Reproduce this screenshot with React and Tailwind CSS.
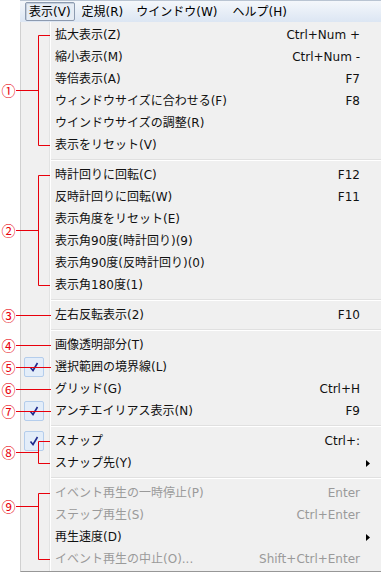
import React from 'react';

// Menu definition - null marks a separator
const items = [
  { label: '拡大表示(Z)', key: 'Ctrl+Num +' },
  { label: '縮小表示(M)', key: 'Ctrl+Num -' },
  { label: '等倍表示(A)', key: 'F7' },
  { label: 'ウィンドウサイズに合わせる(F)', key: 'F8' },
  { label: 'ウインドウサイズの調整(R)' },
  { label: '表示をリセット(V)' },
  null,
  { label: '時計回りに回転(C)', key: 'F12' },
  { label: '反時計回りに回転(W)', key: 'F11' },
  { label: '表示角度をリセット(E)' },
  { label: '表示角90度(時計回り)(9)' },
  { label: '表示角90度(反時計回り)(0)' },
  { label: '表示角180度(1)' },
  null,
  { label: '左右反転表示(2)', key: 'F10' },
  null,
  { label: '画像透明部分(T)' },
  { label: '選択範囲の境界線(L)', checked: true },
  { label: 'グリッド(G)', key: 'Ctrl+H' },
  { label: 'アンチエイリアス表示(N)', key: 'F9', checked: true },
  null,
  { label: 'スナップ', key: 'Ctrl+:', checked: true },
  { label: 'スナップ先(Y)', sub: true },
  null,
  { label: 'イベント再生の一時停止(P)', key: 'Enter', disabled: true },
  { label: 'ステップ再生(S)', key: 'Ctrl+Enter', disabled: true },
  { label: '再生速度(D)', sub: true },
  { label: 'イベント再生の中止(O)...', key: 'Shift+Ctrl+Enter', disabled: true },
];

// Callout marks: circle y, and bracket range (or single line)
const marks = [
  { n: '①', y: 90, from: 35, to: 145 },
  { n: '②', y: 230, from: 175, to: 285 },
  { n: '③', y: 315 },
  { n: '④', y: 345 },
  { n: '⑤', y: 367 },
  { n: '⑥', y: 389 },
  { n: '⑦', y: 411 },
  { n: '⑧', y: 452, from: 441, to: 463 },
  { n: '⑨', y: 506, from: 493, to: 559 },
];

function CheckBox() {
  return (
    <div className="w-[20px] h-[20px] ml-[3px] rounded-[2px] border border-[#b4cdec] bg-[#e3edf9] flex items-center justify-center">
      <svg width="10" height="10" viewBox="0 0 10 10">
        <path d="M1.5 5.5 L4 8.5 L8.5 1" fill="none" stroke="#1f2a8c" strokeWidth="1.6" />
      </svg>
    </div>
  );
}

function MenuItem({ item }) {
  return (
    <div className="flex items-center h-[22px]">
      <div className="w-[29px] shrink-0 flex items-center">
        {item.checked && <CheckBox />}
      </div>
      <span className={`pl-[5px] flex-1 whitespace-nowrap ${item.disabled ? 'text-[#9a9a9a]' : 'text-[#111]'}`}>
        {item.label}
      </span>
      {item.key && (
        <span className={`pr-[21px] whitespace-nowrap ${item.disabled ? 'text-[#9a9a9a]' : 'text-[#111]'}`}>
          {item.key}
        </span>
      )}
      {item.sub && (
        <svg className="mr-[11px]" width="4" height="7" viewBox="0 0 4 7">
          <path d="M0 0 L4 3.5 L0 7 Z" fill="#000" />
        </svg>
      )}
    </div>
  );
}

export default function App() {
  return (
    <div
      className="relative w-[381px] h-[574px] bg-white overflow-hidden text-[12px]"
      style={{ fontFamily: '"DejaVu Sans", "Noto Sans CJK JP", sans-serif' }}
    >
      {/* Menu bar */}
      <div className="ml-[20px] h-[22px] border-t border-[#b9c4d2] bg-gradient-to-b from-[#f4f7fb] to-[#dce6f3] flex items-center gap-[2px] pl-[5px]">
        <div className="h-[19px] px-[3px] flex items-center border border-[#8d9bb0] rounded-[2px] bg-[#e6ecf4] shadow-[inset_1px_1px_0_#c4cedb]">
          表示(V)
        </div>
        <div className="px-[5px]">定規(R)</div>
        <div className="px-[6px]">ウインドウ(W)</div>
        <div className="px-[7px]">ヘルプ(H)</div>
      </div>

      {/* Dropdown panel */}
      <div className="relative ml-[20px] h-[550px] bg-[#f0f0f0] border-l border-[#d0d0d0] border-b border-b-[#979797] pt-[2px]">
        <div className="absolute left-[28px] top-0 bottom-0 w-[2px] border-l border-[#e2e3e3] border-r border-r-white" />
        {items.map((item, i) =>
          item ? (
            <MenuItem key={i} item={item} />
          ) : (
            <div key={i} className="h-[8px] pl-[30px] pt-[3px]">
              <div className="border-t border-[#e0e0e0] border-b border-b-white" />
            </div>
          )
        )}
      </div>

      {/* Red callouts */}
      <svg className="absolute left-0 top-0 pointer-events-none" width="60" height="574">
        {marks.map((m) =>
          m.from ? (
            <g key={m.n} stroke="#e8000b" strokeWidth="1" fill="none">
              <path d={`M16 ${m.y + 0.5} H38.5`} />
              <path d={`M38.5 ${m.from + 0.5} V${m.to + 0.5}`} />
              <path d={`M38.5 ${m.from + 0.5} H50 M38.5 ${m.to + 0.5} H50`} />
            </g>
          ) : (
            <path key={m.n} d={`M16 ${m.y + 0.5} H51`} stroke="#e8000b" strokeWidth="1" />
          )
        )}
      </svg>
      {marks.map((m) => (
        <span
          key={m.n}
          className="absolute left-[1px] w-[15px] text-center text-[#e8000b] text-[14px] leading-[14px]"
          style={{ top: m.y - 7, fontFamily: '"Noto Sans CJK JP", sans-serif' }}
        >
          {m.n}
        </span>
      ))}
    </div>
  );
}
